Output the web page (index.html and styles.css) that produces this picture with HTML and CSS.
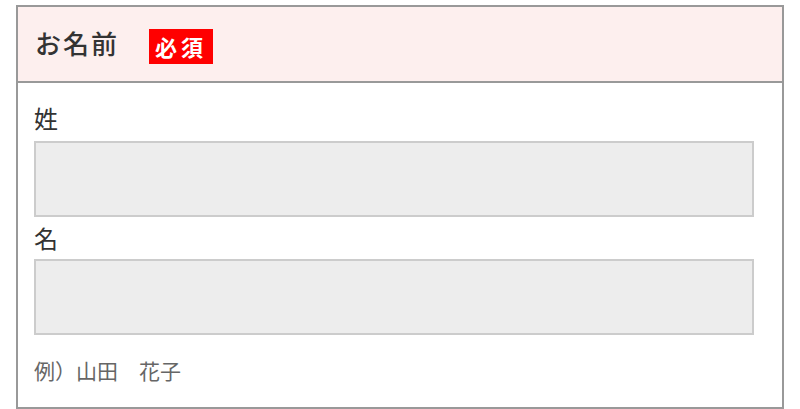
FILE: index.html
```html
<!DOCTYPE html>
<html lang="ja">
<head>
<meta charset="utf-8">
<title>お名前</title>
<link rel="stylesheet" href="styles.css">
</head>
<body>
<div class="page">
  <section class="field">
    <header class="field-head">
      <h2 class="field-title">お名前</h2>
      <span class="badge">必須</span>
    </header>
    <div class="field-body">
      <label class="sub-label first" for="sei">姓</label>
      <input class="text-input" id="sei" type="text">
      <label class="sub-label" for="mei">名</label>
      <input class="text-input" id="mei" type="text">
      <p class="example">例）山田　花子</p>
    </div>
  </section>
</div>
</body>
</html>
```
FILE: styles.css
```css
html, body {
  margin: 0;
  padding: 0;
  background: #fff;
}
.page {
  padding: 5px 16px 0 16px;
  font-family: "Noto Sans CJK JP", "Noto Sans", sans-serif;
  color: #333;
}
.field {
  border: 2px solid #999;
  box-sizing: border-box;
  width: 768px;
}
.field-head {
  background: #fdefee;
  border-bottom: 2px solid #999;
  height: 74px;
  display: flex;
  align-items: center;
  padding-left: 17px;
}
.field-title {
  margin: -2px 0 0 0;
  font-size: 26px;
  font-weight: 500;
  letter-spacing: 2px;
  line-height: 1;
  color: #333;
}
.badge {
  margin-left: 30px;
  margin-top: 5px;
  background: #ff0000;
  color: #fff;
  font-weight: 700;
  font-size: 22px;
  line-height: 35px;
  height: 35px;
  width: 52px;
  padding: 0 6px;
  letter-spacing: 4px;
  white-space: nowrap;
}
.field-body {
  padding: 16px 0 22px 16px;
}
.sub-label {
  display: block;
  font-size: 24px;
  line-height: 42px;
  height: 42px;
  color: #333;
}
.sub-label.first {
  line-height: 38px;
}
.text-input {
  display: block;
  box-sizing: border-box;
  width: 720px;
  height: 76px;
  margin: 0;
  border: 2px solid #ccc;
  background: #ededed;
  outline: none;
}
.example {
  margin: 20px 0 0 0;
  font-size: 21px;
  line-height: 30px;
  color: #666;
}
```
